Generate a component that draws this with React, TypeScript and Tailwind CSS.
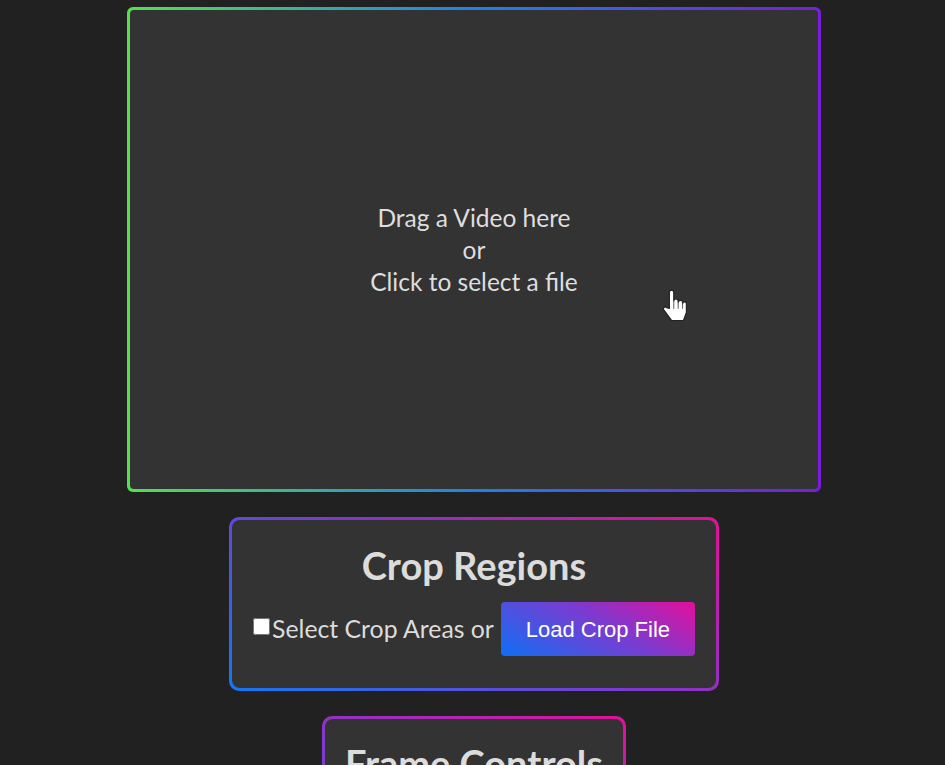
import React from 'react';

const font = { fontFamily: 'Lato, "Open Sans", sans-serif' };

// mouse pointer that sits over the drop zone in the capture
const HandCursor: React.FC = () => (
  <svg width="25" height="33" viewBox="0 0 17 22.5" className="absolute left-[662px] top-[289px] pointer-events-none">
    <path
      d="M5 13.2V2.3a1.5 1.5 0 0 1 3 0V8.3a1.5 1.5 0 0 1 3 0V9.2a1.5 1.5 0 0 1 3 0v.9a1.3 1.3 0 0 1 2.6 0V16L14.6 21.5H6.6L1.2 14.3a1.2 1.2 0 0 1 1.9-1.5L5 13.2Z"
      fill="#fff"
      stroke="#222"
      strokeWidth="0.8"
      strokeLinejoin="round"
    />
    <path d="M8 8.5v5M11 9.2v4.3M14 10v3.5" stroke="#444" strokeWidth="0.6" />
  </svg>
);

export default function App() {
  return (
    <div className="min-h-[765px] bg-[#212121] text-[#dcdcdc] relative overflow-hidden" style={font}>
      <div className="flex flex-col items-center pt-[7px] pl-[3px] gap-[25px]">
        {/* drop zone */}
        <div className="w-[694px] h-[485px] rounded-[6px] p-[3px] bg-[linear-gradient(to_right,#52e24a,#1c82ea_50%,#7a1cdc)]">
          <div className="w-full h-full rounded-[4px] bg-[#333333] flex flex-col items-center justify-center text-[24.5px] leading-[32px] text-center text-[#dedede] cursor-pointer">
            <span>Drag a Video here</span>
            <span>or</span>
            <span>Click to select a file</span>
          </div>
        </div>

        {/* crop regions */}
        <div className="w-[490px] h-[174px] rounded-[10px] p-[3px] bg-[linear-gradient(30deg,#1279f2,#7a3bd0_50%,#e3109a)]">
          <div className="h-full rounded-[8px] bg-[#333333] pt-[23px] flex flex-col items-center">
            <h2 className="text-[38px] font-bold leading-[44px] text-[#dcdcdc]">Crop Regions</h2>
            <div className="mt-[15px] flex items-center">
              <input type="checkbox" className="w-[17px] h-[17px] m-0 mb-[5px] accent-white" />
              <span className="text-[24.8px] leading-[32px] ml-[2px] mr-[7px]">Select Crop Areas or</span>
              <button
                className="w-[194px] h-[54px] rounded-[4px] text-white text-[22px] bg-[linear-gradient(30deg,#0f6ff5,#7a3bd0_55%,#e30f9c)]"
                style={{ fontFamily: '"Liberation Sans", Arial, sans-serif' }}
              >
                Load Crop File
              </button>
            </div>
          </div>
        </div>

        {/* frame controls */}
        <div className="w-[304px] rounded-[10px] p-[3px] bg-[linear-gradient(30deg,#1279f2,#7a3bd0_35%,#e3109a)]">
          <div className="rounded-[8px] bg-[#333333] pt-[22px] pb-[30px] flex flex-col items-center">
            <h2 className="text-[38px] font-bold leading-[44px] text-[#dcdcdc] whitespace-nowrap">Frame Controls</h2>
            <div className="h-[60px]" />
          </div>
        </div>
      </div>
      <HandCursor />
    </div>
  );
}
